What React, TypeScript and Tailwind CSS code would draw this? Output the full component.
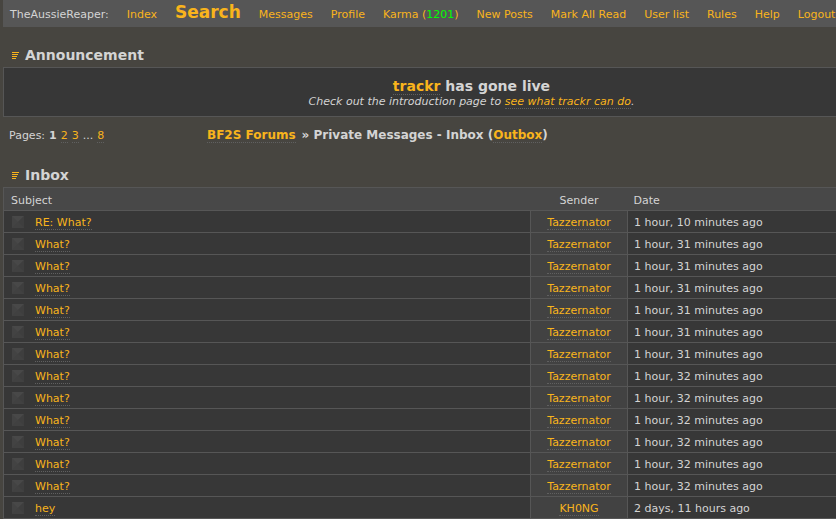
import type { ReactNode } from "react";

type Message = { subject: string; sender: string; date: string };

const navLinks = [
  { label: "Index" },
  { label: "Search", big: true },
  { label: "Messages" },
  { label: "Profile" },
  { label: "Karma", count: "1201" },
  { label: "New Posts" },
  { label: "Mark All Read" },
  { label: "User list" },
  { label: "Rules" },
  { label: "Help" },
  { label: "Logout" },
];

const what = (date: string): Message => ({ subject: "What?", sender: "Tazzernator", date });

const messages: Message[] = [
  { subject: "RE: What?", sender: "Tazzernator", date: "1 hour, 10 minutes ago" },
  ...Array.from({ length: 6 }, () => what("1 hour, 31 minutes ago")),
  ...Array.from({ length: 6 }, () => what("1 hour, 32 minutes ago")),
  { subject: "hey", sender: "KH0NG", date: "2 days, 11 hours ago" },
];

function DottedLink({ children }: { children: ReactNode }) {
  return (
    <a href="#" className="border-b border-dotted border-[#606060] text-[#f9b41c] hover:text-white">
      {children}
    </a>
  );
}

function SectionTitle({ children }: { children: ReactNode }) {
  return (
    <h2 className="flex items-center gap-1.5 pl-2 text-sm leading-4 font-bold">
      <svg width="8" height="8" viewBox="0 0 8 8" className="mt-0.5" fill="#f9b41c" shapeRendering="crispEdges" aria-hidden="true">
        <rect x="1" y="0" width="7" height="1" />
        <rect x="1" y="2" width="6" height="1" />
        <rect x="1" y="4" width="5" height="1" />
        <rect x="1" y="6" width="4" height="1" />
      </svg>
      {children}
    </h2>
  );
}

function MessageIcon() {
  return (
    <svg width="12" height="12" viewBox="0 0 12 12" className="mb-0.5 shrink-0" aria-hidden="true">
      <rect width="12" height="12" fill="#434343" />
      <path d="M0 0h12L6 6z" fill="#484848" />
      <path d="M12 0v12L6 6z" fill="#3e3e3e" />
      <path d="M0 12h12L6 6z" fill="#414141" />
    </svg>
  );
}

export default function App() {
  return (
    <div className="min-h-screen overflow-hidden bg-[#474540] font-['DejaVu_Sans',sans-serif] text-[11px] leading-4 text-[#d4d4d4]">
      {/* the forum never gets narrower than this, it runs off the right edge instead */}
      <div className="min-w-[940px] pl-[3px]">
        <nav className="flex h-[27px] items-baseline gap-[18px] bg-[#565656] pl-[7px] whitespace-nowrap">
          <span>TheAussieReaper:</span>
          {navLinks.map((link) => (
            <a
              key={link.label}
              href="#"
              className={`text-[#f9b41c] hover:text-white ${link.big ? "text-[17px] leading-6 font-bold" : ""}`}
            >
              {link.label}
              {link.count && (
                <>
                  {" ("}
                  <span className="text-[#00ff00]">{link.count}</span>)
                </>
              )}
            </a>
          ))}
        </nav>

        <section className="pt-5">
          <SectionTitle>Announcement</SectionTitle>
          <div className="mt-1 border border-[#565656] bg-[#373737] pt-2.5 pb-1.5 text-center">
            <p className="text-sm leading-4 font-bold">
              <DottedLink>trackr</DottedLink> has gone live
            </p>
            <p className="leading-4 italic">
              Check out the introduction page to <DottedLink>see what trackr can do</DottedLink>.
            </p>
          </div>
        </section>

        <div className="flex pt-2.5 pl-1.5">
          <div className="flex w-[198px] gap-1 pt-px">
            <span>Pages:</span>
            <strong>1</strong>
            <span><DottedLink>2</DottedLink></span>
            <span><DottedLink>3</DottedLink></span>
            <span>...</span>
            <span><DottedLink>8</DottedLink></span>
          </div>
          <div className="flex gap-1.5 text-xs leading-4 font-bold">
            <span><DottedLink>BF2S Forums</DottedLink></span>
            <span>
              » Private Messages - Inbox (<DottedLink>Outbox</DottedLink>)
            </span>
          </div>
        </div>

        <section className="pt-[23px]">
          <SectionTitle>Inbox</SectionTitle>
          <table className="mt-1 w-full table-fixed border-collapse border border-[#565656] bg-[#373737]">
            <thead>
              <tr className="h-[23px] bg-[#484848] text-left">
                <th className="pt-1 pl-[7px] font-normal">Subject</th>
                <th className="w-[97px] pt-1 text-center font-normal">Sender</th>
                <th className="w-1/3 pt-1 pl-1.5 font-normal">Date</th>
              </tr>
            </thead>
            <tbody>
              {messages.map((message, i) => (
                <tr key={i} className="h-[22px] border-t border-[#565656]">
                  <td className="pt-0.5 pl-2">
                    <div className="flex items-center gap-[11px]">
                      <MessageIcon />
                      <span><DottedLink>{message.subject}</DottedLink></span>
                    </div>
                  </td>
                  <td className="border-x border-[#565656] bg-[#424242] pt-0.5 text-center">
                    <DottedLink>{message.sender}</DottedLink>
                  </td>
                  <td className="pt-0.5 pl-1.5">{message.date}</td>
                </tr>
              ))}
            </tbody>
          </table>
        </section>
      </div>
    </div>
  );
}
